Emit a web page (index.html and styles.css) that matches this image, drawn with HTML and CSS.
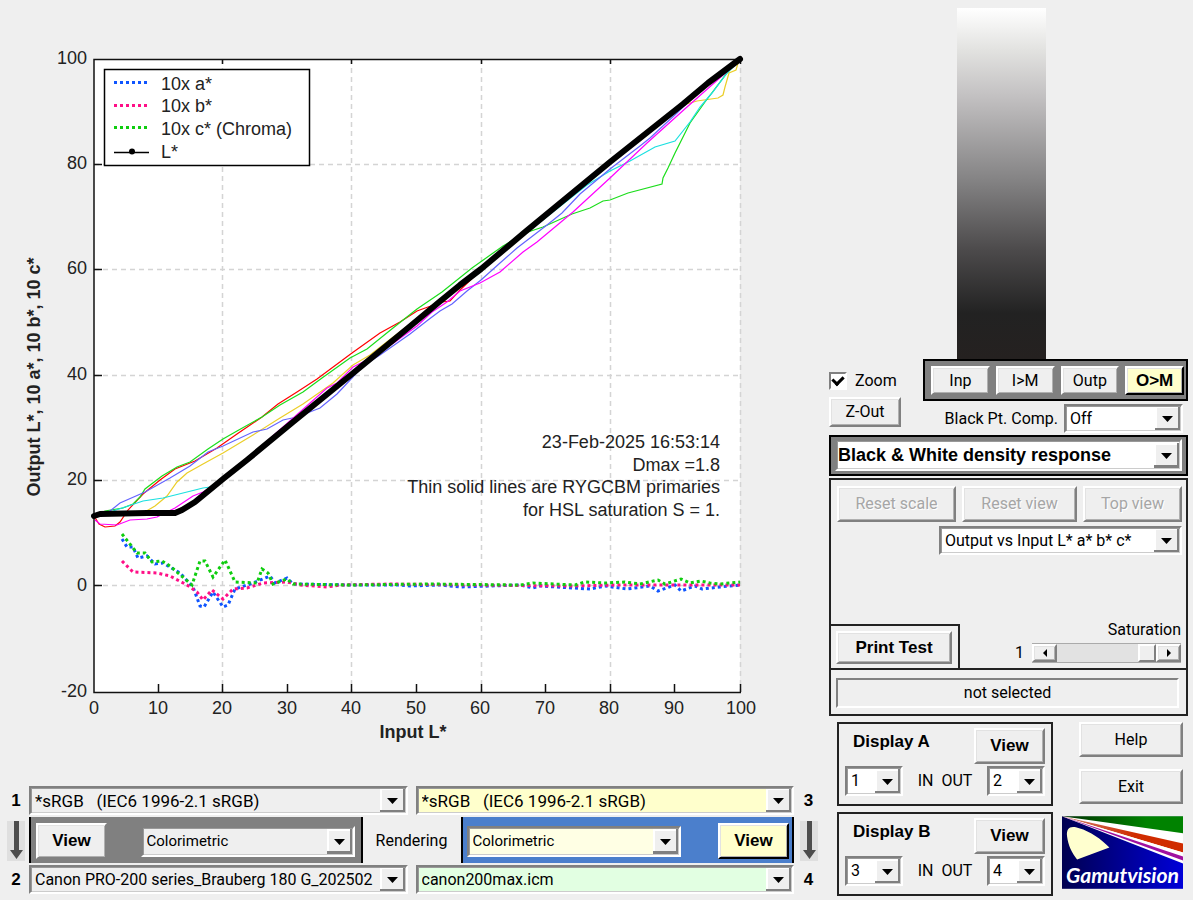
FILE: index.html
```html
<!DOCTYPE html>
<html lang="en">
<head>
<meta charset="utf-8">
<title>Gamutvision</title>
<link rel="stylesheet" href="styles.css">
</head>
<body>
<main class="app">
  <section class="left">
    <svg class="chart" viewBox="0 0 820 786" role="img" aria-label="Output versus input L* a* b* c*">
      <rect x="94" y="59" width="646" height="633" fill="#fff"/>
      <g class="grid-lines">
        <path d="M94 164.500H740M94 269.500H740M94 375.500H740M94 480.500H740M94 585.500H740"/>
        <path d="M222.500 59V692M351.500 59V692M481.500 59V692M610.500 59V692M740.500 59V692"/>
      </g>
      <path class="axes" d="M740 59.500H94V692.500H741M94 164.500h8M94 269.500h8M94 375.500h8M94 480.500h8M94 585.500h8M158.500 692v-8M222.500 692v-8M287.500 692v-8M351.500 692v-8M416.500 692v-8M481.500 692v-8M545.500 692v-8M610.500 692v-8M674.500 692v-8M740.500 692v-8M222.500 59v5M351.500 59v5M481.500 59v5M610.500 59v5M740.500 59v5"/>
      <g class="primary">
        <polyline stroke="#f00" points="94,516 99,524 105,527 115,526 120,522 128,510 143,494 160,480 175,469 195,461 217,448 237,434 262,417 278,404 297,392 317,379 352,353 380,333 400,322 417,311 428,307 442,302 450,301 460,290 481,270 610,164 683,105 708,85 740,59"/>
        <polyline stroke="#ebce28" points="94,516 143,513 155,506 167,496 177,482 187,473 203,464 223,453 253,435 280,418 303,404 333,383 353,365 370,355 481,269 610,163 658,125 683,105 697,101 718,98 723,95 725,87 729,73 736,70 739,60"/>
        <polyline stroke="#1bdd1b" points="94,516 105,511 123,508 133,504 140,497 145,489 162,476 177,467 190,462 208,449 223,439 237,431 262,417 280,405 303,392 322,378 350,358 367,349 393,328 417,309 442,292 472,268 503,246 525,233 543,227 572,214 590,208 603,201 610,200 628,193 662,184 663,178 668,168 675,153 690,123 705,102 727,73 740,59"/>
        <polyline stroke="#1be0e0" points="94,516 113,511 143,501 163,498 203,488 210,487 223,479 352,374 481,269 587,185 610,171 630,161 655,147 675,141 690,122 700,107 712,93 727,73 740,60"/>
        <polyline stroke="#6464ff" points="94,516 110,511 120,503 145,492 170,478 190,466 208,452 223,446 253,432 267,429 283,420 297,417 320,408 337,394 352,378 363,366 380,355 410,334 428,320 440,311 452,304 467,291 481,280 500,263 517,248 547,225 562,213 580,194 610,169 640,146 650,138 677,113 697,93 713,80 740,60"/>
        <polyline stroke="#f0f" points="95,520 100,524 117,525 130,520 147,519 157,517 175,508 193,496 203,492 223,480 300,412 327,388 337,383 353,367 363,362 380,352 395,342 417,326 432,312 447,302 460,291 480,283 500,272 523,252 537,242 573,212 610,178 647,143 687,107 713,84 740,60"/>
      </g>
      <g class="error">
        <polyline stroke="#0f55ff" points="122,539 127,547 133,547 138,558 147,556 155,564 163,563 180,573 193,587 200,606 204,607 213,592 223,607 228,605 235,589 253,583 270,576 275,583 287,578 293,584 350,585 400,585 410,586 440,585 460,587 520,585 533,588 540,586 590,589 605,586 627,589 650,586 658,591 675,585 681,591 695,586 702,589 720,587 740,585"/>
        <polyline stroke="#ff0f87" points="122,561 133,572 157,573 170,576 187,585 197,592 203,600 212,590 223,599 233,589 247,588 263,583 287,582 300,585 327,587 340,585 390,584 470,585 570,586 620,585 680,585 740,585"/>
        <polyline stroke="#0fcd0f" points="122,534 137,553 145,553 152,562 162,561 170,566 192,585 200,561 205,561 213,577 225,560 235,582 257,583 262,569 268,573 273,584 287,579 293,584 350,585 430,584 520,585 533,583 575,585 585,582 605,583 625,582 640,584 658,580 665,584 681,579 690,583 701,581 710,583 720,584 740,582"/>
      </g>
      <polyline class="lightness" points="94,516 100,514 147,513 175,513 182,510 195,502 223,479 247,460 293,422 352,374 408,328 438,303 460,285 481,269 525,232 610,162 683,104 708,83 740,59"/>
      <rect class="legend" x="104.500" y="69.500" width="205" height="96"/>
      <g class="error">
        <path stroke="#0f55ff" d="M114 82.500h34"/>
        <path stroke="#ff0f87" d="M114 105.500h34"/>
        <path stroke="#0fcd0f" d="M114 127.500h34"/>
      </g>
      <path d="M114 152.500h35" stroke="#000" stroke-width="1.500"/>
      <circle cx="132" cy="151.500" r="3"/>
      <g class="label">
        <text x="161" y="90">10x a*</text>
        <text x="161" y="112">10x b*</text>
        <text x="161" y="135">10x c* (Chroma)</text>
        <text x="161" y="158">L*</text>
      </g>
      <g class="label end">
        <text x="720" y="448">23-Feb-2025 16:53:14</text>
        <text x="720" y="471">Dmax =1.8</text>
        <text x="720" y="493">Thin solid lines are RYGCBM primaries</text>
        <text x="720" y="516">for HSL saturation S = 1.</text>
        <text x="87" y="64">100</text>
        <text x="87" y="169">80</text>
        <text x="87" y="274">60</text>
        <text x="87" y="380">40</text>
        <text x="87" y="485">20</text>
        <text x="87" y="591">0</text>
        <text x="87" y="697">-20</text>
      </g>
      <g class="label mid">
        <text x="94" y="714">0</text>
        <text x="158" y="714">10</text>
        <text x="222" y="714">20</text>
        <text x="287" y="714">30</text>
        <text x="351" y="714">40</text>
        <text x="416" y="714">50</text>
        <text x="480" y="714">60</text>
        <text x="545" y="714">70</text>
        <text x="609" y="714">80</text>
        <text x="674" y="714">90</text>
        <text x="741" y="714">100</text>
        <text class="axis-title" x="413" y="738">Input L*</text>
        <text class="axis-title" transform="translate(40 377) rotate(-90)">Output L*, 10 a*, 10 b*, 10 c*</text>
      </g>
    </svg>

    <div class="profiles">
      <div class="side">
        <label for="p1">1</label>
        <svg class="arrow" viewBox="0 0 18 40"><path d="M7 0h5v29h4L9.500 38 3 29h4z"/></svg>
        <label for="p2">2</label>
      </div>
      <div class="stack">
        <div class="pair">
          <select id="p1" class="combo"><option>*sRGB &nbsp; (IEC6 1996-2.1 sRGB)</option></select>
          <select id="p3" class="combo cream"><option>*sRGB &nbsp; (IEC6 1996-2.1 sRGB)</option></select>
        </div>
        <div class="rendering">
          <div class="intent gray">
            <button class="btn bold view">View</button>
            <select class="combo" aria-label="Rendering intent 1 to 2"><option>Colorimetric</option></select>
          </div>
          <span class="caption">Rendering</span>
          <div class="intent blue">
            <select class="combo ivory" aria-label="Rendering intent 3 to 4"><option>Colorimetric</option></select>
            <button class="btn bold view active">View</button>
          </div>
        </div>
        <div class="pair files">
          <select id="p2" class="combo"><option>Canon PRO-200 series_Brauberg 180 G_202502</option></select>
          <select id="p4" class="combo mint"><option>canon200max.icm</option></select>
        </div>
      </div>
      <div class="side">
        <label for="p3">3</label>
        <svg class="arrow" viewBox="0 0 18 40"><path d="M7 0h5v29h4L9.500 38 3 29h4z"/></svg>
        <label for="p4">4</label>
      </div>
    </div>
  </section>

  <aside class="right">
    <div class="ramp"></div>
    <div class="top-controls">
      <div class="zoom">
        <label class="check"><input type="checkbox" checked>Zoom</label>
        <button class="btn">Z-Out</button>
      </div>
      <div class="source">
        <div class="source-bar">
          <button class="btn">Inp</button>
          <button class="btn">I&gt;M</button>
          <button class="btn">Outp</button>
          <button class="btn bold active">O&gt;M</button>
        </div>
        <div class="bpc">
          <label for="bpc">Black Pt. Comp.</label>
          <select id="bpc" class="combo white"><option>Off</option></select>
        </div>
      </div>
    </div>

    <div class="mode">
      <select class="combo white bold" aria-label="Display mode"><option>Black &amp; White density response</option></select>
    </div>

    <div class="panel">
      <div class="resets">
        <button class="btn" disabled>Reset scale</button>
        <button class="btn" disabled>Reset view</button>
        <button class="btn" disabled>Top view</button>
      </div>
      <select class="combo white plot" aria-label="Plot"><option>Output vs Input L* a* b* c*</option></select>
      <div class="lower">
        <div class="print"><button class="btn bold">Print Test</button></div>
        <div class="saturation">
          <span>Saturation</span>
          <div class="slider">
            <span>1</span>
            <div class="scroll">
              <button class="btn" aria-label="Decrease"><svg viewBox="0 0 8 8"><path d="M6 0v8L2 4z"/></svg></button>
              <input type="range" min="0" max="1" step="0.01" value="1" aria-label="Saturation">
              <button class="btn" aria-label="Increase"><svg viewBox="0 0 8 8"><path d="M2 0v8l4-4z"/></svg></button>
            </div>
          </div>
        </div>
      </div>
      <div class="status"><output>not selected</output></div>
    </div>

    <div class="bottom">
      <div class="displays">
        <div class="display">
          <div class="line"><strong>Display A</strong><button class="btn bold">View</button></div>
          <div class="line">
            <select class="combo white" aria-label="Display A in"><option>1</option></select>
            <span class="io">IN&nbsp; OUT</span>
            <select class="combo white" aria-label="Display A out"><option>2</option></select>
          </div>
        </div>
        <div class="display">
          <div class="line"><strong>Display B</strong><button class="btn bold">View</button></div>
          <div class="line">
            <select class="combo white" aria-label="Display B in"><option>3</option></select>
            <span class="io">IN&nbsp; OUT</span>
            <select class="combo white" aria-label="Display B out"><option>4</option></select>
          </div>
        </div>
      </div>
      <div class="actions">
        <button class="btn">Help</button>
        <button class="btn">Exit</button>
        <svg class="logo" viewBox="0 0 120 72">
          <defs>
            <linearGradient id="navy"><stop offset="0" stop-color="#000050"/><stop offset="1" stop-color="#0000d8"/></linearGradient>
            <linearGradient id="leaf"><stop offset="0" stop-color="#003000"/><stop offset=".7" stop-color="#008200"/></linearGradient>
            <linearGradient id="rust"><stop offset="0" stop-color="#d08070"/><stop offset=".6" stop-color="#d02c00"/></linearGradient>
          </defs>
          <rect width="120" height="72" fill="url(#navy)"/>
          <path d="M0 0H120V47z" fill="#fff"/>
          <path d="M0 0H120V17z" fill="url(#leaf)"/>
          <path d="M0 0 120 27v9z" fill="url(#rust)"/>
          <path d="M0 0 120 36v4z" fill="#fff"/>
          <path d="M0 0 120 40v4z" fill="#a010a0"/>
          <path d="M5 20C4 11 9 9 17 12 28 15 39 23 47 31L15 43C10 37 6 29 5 20z" fill="#ffffcf"/>
          <text x="60" y="66" text-anchor="middle">Gamutvision</text>
        </svg>
      </div>
    </div>
  </aside>
</main>
</body>
</html>
```
FILE: styles.css
```css
* { box-sizing: border-box; }

body {
  margin: 0;
  background: #efefef;
  color: #000;
  font: 16px/20px Roboto, "Liberation Sans", sans-serif;
}

button, select, input { font: inherit; color: inherit; margin: 0; }

.app { display: flex; min-height: 100vh; }
.left { flex: 1; min-width: 0; }
.right { flex: 0 0 373px; padding: 8px 5px 0 9px; }
.bold, strong, .side { font: 700 17px/20px "Liberation Sans", Arial, sans-serif; }

/* chart */
.chart { display: block; width: 100%; }
.grid-lines { fill: none; stroke: #d4d4d4; stroke-width: 1.5; stroke-dasharray: 5 4; }
.axes { fill: none; stroke: #111; stroke-width: 1.5; }
.primary { fill: none; stroke-width: 1.2; }
.error { fill: none; stroke-width: 3; stroke-dasharray: 3 3; }
.lightness { fill: none; stroke: #000; stroke-width: 6; stroke-linejoin: round; stroke-linecap: round; }
.legend { fill: #fff; stroke: #000; stroke-width: 1.5; }
.label { font: 18px "Liberation Sans", Arial, sans-serif; fill: #222; }
.end { text-anchor: end; }
.mid { text-anchor: middle; }
.axis-title { font-weight: 700; }

/* classic controls */
.btn {
  background: #efefef;
  border: 2px solid;
  border-color: #fff #808080 #808080 #fff;
  box-shadow: inset 1px 1px #e2e2e2, inset -1px -1px #b0b0b0;
  border-radius: 0;
  padding: 0;
}
.btn:disabled { color: #a6a6a6; text-shadow: 1px 1px #fff; }
.btn.active { background: #ffc; border-color: #fff #000 #000 #fff; }

.combo {
  appearance: none;
  width: 100%;
  height: 29px;
  border: 2px solid;
  border-color: #808080 #fff #fff #808080;
  border-radius: 0;
  box-shadow: inset 1px 1px #999, inset -1px -1px #ccc;
  padding: 0 26px 0 4px;
  background: #efefef url("data:image/svg+xml,%3Csvg xmlns='http://www.w3.org/2000/svg' width='26' height='25'%3E%3Cpath fill='%23efefef' d='M0 0h26v25H0z'/%3E%3Cpath fill='%23808080' d='M23 0h3v25H0v-3h23z'/%3E%3Cpath fill='%23fff' d='M0 0h23v2H2v20H0z'/%3E%3Cpath d='M7 10h11l-5.500 6z'/%3E%3C/svg%3E") right center / 26px 25px no-repeat;
}
.combo.white { background-color: #fff; }
.combo.cream { background-color: #ffc; }
.combo.ivory { background-color: #ffffe4; }
.combo.mint { background-color: #e2ffe2; }

/* profile selectors */
.profiles { display: grid; grid-template-columns: 29px 1fr 26px; }
.side { display: flex; flex-direction: column; align-items: center; justify-content: space-between; padding: 5px 0 4px 3px; }
.arrow { width: 18px; height: 40px; background: #dfdfdf; fill: #4d4d4d; }
.stack { display: grid; gap: 2px; }
.pair { display: grid; grid-template-columns: 1fr 1fr; gap: 8px; }
.pair .combo { font-size: 17px; }
.files .combo { font-size: 16px; }
.rendering { display: grid; grid-template-columns: 1fr 98px 1fr; height: 46px; }
.intent { display: flex; align-items: center; justify-content: space-between; border: solid #000; border-width: 0 2px; padding-top: 2px; }
.intent .combo { flex: 0 0 214px; height: 31px; font-size: 15px; }
.gray { background: #808080; padding-left: 5px; padding-right: 6px; }
.blue { background: #4b7fcc; padding-left: 4px; padding-right: 3px; }
.caption { text-align: center; align-self: center; padding-top: 2px; }
.view { width: 71px; height: 36px; }

/* right column */
.ramp { width: 89px; height: 351px; margin-left: 128px; background: linear-gradient(#fff, #e2e2e0 12%, #c3c1c2 25%, #848384 49%, #4c4a4b 69%, #222 87%, #252120); }
.top-controls { display: flex; justify-content: space-between; height: 76px; }
.zoom { display: flex; flex-direction: column; gap: 6px; padding-top: 12px; width: 72px; }
.zoom .btn { height: 30px; }
.check { display: flex; align-items: center; gap: 8px; }
.check input {
  appearance: none; width: 18px; height: 18px; background: #fff;
  border: 2px solid; border-color: #808080 #fff #fff #808080; display: grid; place-items: center;
}
.check input:checked::after { content: ""; width: 5px; height: 8px; border: solid #000; border-width: 0 3px 3px 0; rotate: 45deg; margin-bottom: 3px; }
.source-bar { display: flex; gap: 6px; background: #808080; border: 2px solid #000; padding: 5px 2px 4px 6px; height: 42px; width: 265px; }
.source-bar .btn { flex: 1; }
.bpc { display: flex; justify-content: flex-end; align-items: center; gap: 6px; padding: 3px 5px 0 0; }
.bpc .combo { width: 119px; }
.mode { background: #808080; border: 2px solid #000; padding: 2px 4px 3px; }
.mode .combo { height: 32px; display: block; padding-left: 1px; font-size: 18px; }

.panel { border: 2px solid #222; margin-top: 2px; height: 238px; display: flex; flex-direction: column; }
.resets { display: grid; grid-template-columns: 119px 115px 1fr; gap: 6px; padding: 6px 4px 0 6px; }
.resets .btn { height: 36px; }
.plot { width: 243px; margin: 4px 4px 0 0; align-self: flex-end; }
.lower { display: flex; justify-content: space-between; align-items: flex-end; margin-top: auto; }
.print { border: solid #222; border-width: 2px 2px 0 0; padding: 5px 6px 4px 5px; }
.print .btn { width: 116px; height: 33px; }
.saturation { padding: 0 5px 5px 0; text-align: right; }
.slider { display: flex; gap: 8px; justify-content: flex-end; margin-top: 3px; }
.scroll { display: flex; width: 149px; height: 20px; background: #e2e2e2; border: solid #aaa; border-width: 1px 0; }
.scroll .btn { flex: 0 0 25px; display: grid; place-items: center; }
.scroll svg { width: 8px; height: 8px; }
.scroll input { appearance: none; flex: 1; min-width: 0; background: none; }
.scroll input::-webkit-slider-thumb { appearance: none; width: 18px; height: 18px; background: #efefef; border: 2px solid; border-color: #fff #808080 #808080 #fff; }
.status { border-top: 2px solid #222; padding: 8px 7px 6px 5px; }
.status output { display: block; text-align: center; height: 30px; line-height: 26px; border: 2px solid; border-color: #808080 #fff #fff #808080; }

.bottom { display: flex; justify-content: space-between; padding: 6px 5px 0 8px; }
.displays { display: grid; gap: 6px; width: 216px; }
.display { border: 2px solid #222; height: 84px; padding: 4px 6px 0; display: grid; gap: 2px; align-content: start; }
.line { display: flex; justify-content: space-between; align-items: center; }
.line strong { padding: 0 0 8px 8px; }
.line .btn { width: 71px; height: 36px; }
.line .combo { width: 58px; height: 30px; }
.actions { display: flex; flex-direction: column; align-items: flex-end; gap: 12px; width: 122px; }
.actions .btn { width: 104px; height: 35px; }
.logo { width: 121px; height: 73px; }
.logo text { font: italic 700 21px Lato, sans-serif; fill: #fff; }
```
